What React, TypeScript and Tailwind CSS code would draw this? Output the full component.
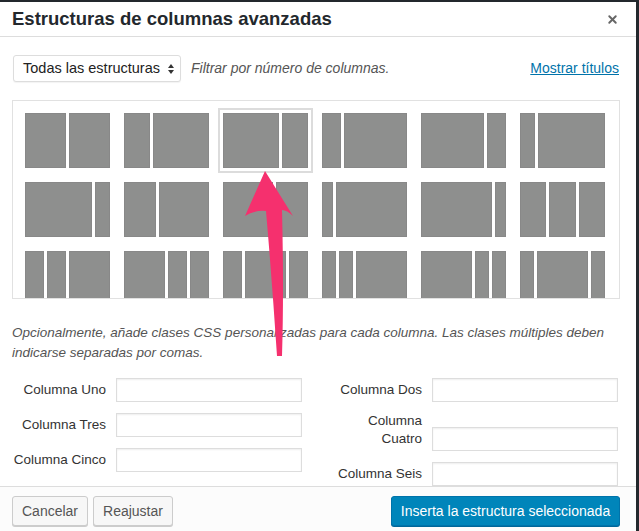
import { X } from 'lucide-react';

const layouts: number[][][] = [
  [[41, 41], [26, 56], [56, 26], [19, 63], [63, 19], [15, 67]],
  [[67, 15], [32, 50], [50, 32], [11, 71], [71, 11], [26, 27, 26]],
  [[19, 19, 41], [41, 19, 19], [19, 41, 19], [14, 14, 51], [51, 14, 14], [14, 51, 14]],
];

function Structure({ parts, selected }: { parts: number[]; selected?: boolean }) {
  return (
    <div
      className={
        'flex h-[55px] w-[85px] gap-[3px] ' +
        (selected ? 'outline-2 outline-offset-[3px] outline-[#dcdcdc]' : '')
      }
    >
      {parts.map((w, i) => (
        <div key={i} className="h-full bg-[#8e8f8e] shadow-[inset_0_0_0_1px_#888]" style={{ width: w }} />
      ))}
    </div>
  );
}

function Input() {
  return <div className="h-[24px] w-[186px] border border-[#ddd] bg-white shadow-[inset_0_1px_2px_rgba(0,0,0,0.07)]" />;
}

function Field({ label, className = '' }: { label: string; className?: string }) {
  return (
    <div className={'flex items-center ' + className}>
      <label className="w-[104px] whitespace-nowrap pr-[10px] text-right text-[13.5px] leading-[18px] text-[#333]">
        {label}
      </label>
      <Input />
    </div>
  );
}

export default function App() {
  return (
    <div className="h-[531px] w-[639px] overflow-hidden bg-[#23282d] pt-[2px] pr-[3px] font-['Liberation_Sans',Arial,sans-serif]">
      <div className="relative flex h-[529px] w-[636px] flex-col overflow-hidden bg-white">
        <header className="flex h-[35px] shrink-0 items-center justify-between border-b border-[#ddd] pl-3 pr-[17px]">
          <h1 className="text-[18.5px] font-bold text-[#23282d]">Estructuras de columnas avanzadas</h1>
          <X size={13} strokeWidth={3.5} className="text-[#666]" />
        </header>

        <div className="flex-1 overflow-hidden">
          <div className="flex items-center pl-[13px] pr-[17px] pt-[18px]">
            <div className="flex h-[27px] w-[168px] items-center justify-between rounded-[3px] border border-[#ddd] bg-white pl-[9px] pr-[6px] text-[14.5px] text-[#222] shadow-[0_1px_1px_rgba(0,0,0,0.05)]">
              <span className="whitespace-nowrap">Todas las estructuras</span>
              <svg width="6" height="10" viewBox="0 0 6 10" className="shrink-0 text-[#333]">
                <path d="M3 0L6 4H0z M3 10L0 6h6z" fill="currentColor" />
              </svg>
            </div>
            <span className="ml-[10px] text-[14px] italic text-[#555]">Filtrar por número de columnas.</span>
            <a href="#" className="ml-auto text-[14px] text-[#0073aa] underline">Mostrar títulos</a>
          </div>

          <div className="mx-3 mt-[18px] h-[199px] w-[608px] overflow-hidden border border-[#e1e1e1] pl-[12px] pt-[12px]">
            <div className="grid grid-cols-[repeat(6,85px)] gap-x-[14px] gap-y-[14px]">
              {layouts.map((row, r) =>
                row.map((parts, c) => (
                  <Structure key={r + '-' + c} parts={parts} selected={r === 0 && c === 2} />
                ))
              )}
            </div>
          </div>

          <p className="mt-[24px] pl-3 pr-5 text-[13.5px] italic leading-[20px] text-[#555]">
            Opcionalmente, añade clases CSS personalizadas para cada columna. Las clases múltiples deben
            indicarse separadas por comas.
          </p>

          <div className="mt-[15px] flex pl-3">
            <div className="flex w-[316px] flex-col gap-[11px]">
              <Field label="Columna Uno" />
              <Field label="Columna Tres" />
              <Field label="Columna Cinco" />
            </div>
            <div className="flex flex-col">
              <Field label="Columna Dos" />
              <div className="mt-[10px] flex items-end">
                <label className="w-[104px] pr-[10px] pb-[3px] text-right text-[13.5px] leading-[18px] text-[#333]">
                  Columna
                  <br />
                  Cuatro
                </label>
                <Input />
              </div>
              <Field label="Columna Seis" className="mt-[11px]" />
            </div>
          </div>
        </div>

        <footer className="flex h-[45px] shrink-0 items-start gap-[5px] border-t border-[#ddd] bg-[#fcfcfc] pl-3 pr-4 pt-[9px]">
          <button className="h-[30px] rounded-[3px] border border-[#ccc] bg-[#f7f7f7] px-[9px] text-[14px] text-[#555] shadow-[0_1px_0_#ccc]">
            Cancelar
          </button>
          <button className="h-[30px] rounded-[3px] border border-[#ccc] bg-[#f7f7f7] px-[9px] text-[14px] text-[#555] shadow-[0_1px_0_#ccc]">
            Reajustar
          </button>
          <button className="ml-auto h-[30px] w-[229px] rounded-[3px] border border-[#0073aa] bg-[#0085ba] text-[14px] text-white shadow-[0_1px_0_#006799]">
            Inserta la estructura seleccionada
          </button>
        </footer>

        <svg className="pointer-events-none absolute left-0 top-0" width="636" height="529" viewBox="0 2 636 529">
          <path
            d="M265 171 L293 216 Q287 210 282 210 Q284 290 282 356 L277 356 Q272 280 266 211 Q254 210 245 216 Z"
            fill="#f5306e"
          />
        </svg>
      </div>
    </div>
  );
}
